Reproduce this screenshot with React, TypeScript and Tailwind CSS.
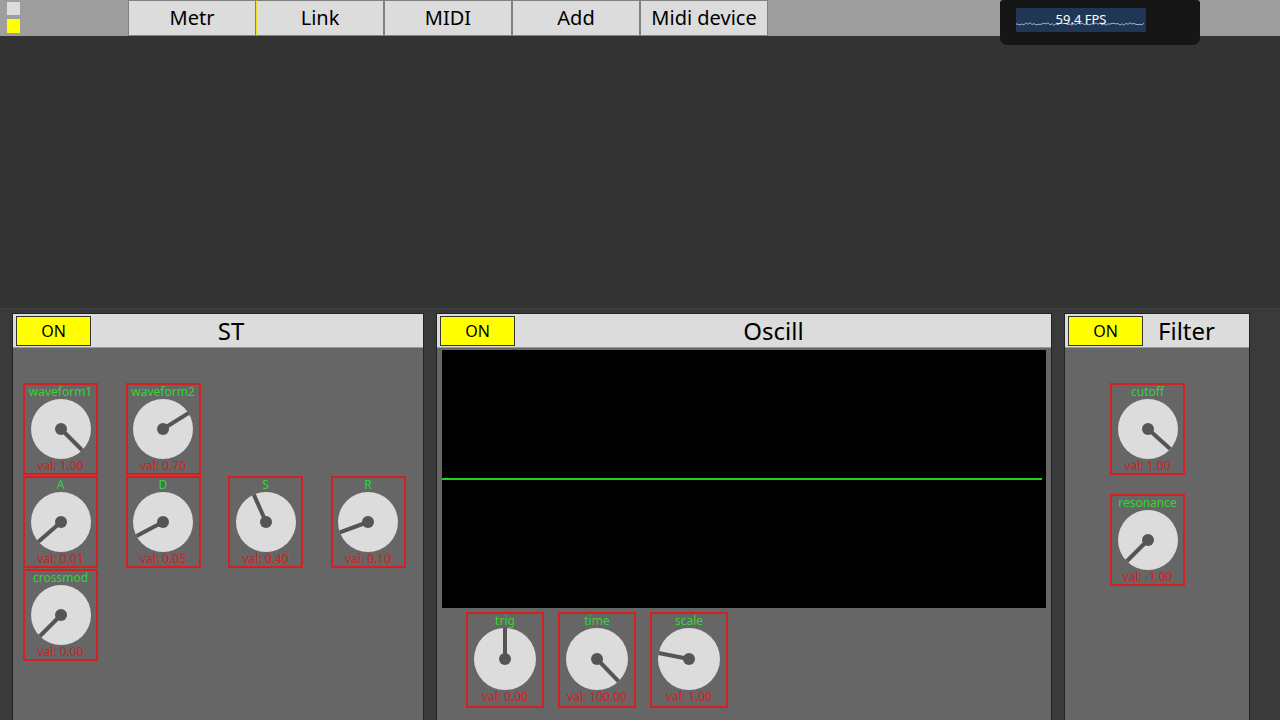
import React from "react";

const font = { fontFamily: '"Noto Sans", "Open Sans", sans-serif' };

interface KnobProps {
  label: string;
  value: string;
  angle: number; // degrees clockwise from 12 o'clock
  big?: boolean;
}

function Knob({ label, value, angle, big }: KnobProps) {
  const r = big ? 31 : 30;
  const size = r * 2 + 2;
  const c = size / 2;
  const rad = (angle * Math.PI) / 180;
  const x2 = c + Math.sin(rad) * r;
  const y2 = c - Math.cos(rad) * r;

  return (
    <div
      className={
        "flex flex-col items-center border-2 border-[#d42020] " +
        (big ? "w-[78px] h-[96px]" : "w-[75px] h-[92px]")
      }
    >
      <div className="pt-px text-[12px] leading-[12px] text-[#2ed82e] whitespace-nowrap">{label}</div>
      <svg width={size} height={size} viewBox={`0 0 ${size} ${size}`}>
        <circle cx={c} cy={c} r={r} fill="#dcdcdc" />
        <line x1={c} y1={c} x2={x2} y2={y2} stroke="#555555" strokeWidth={4} />
        <circle cx={c} cy={c} r={6} fill="#555555" />
      </svg>
      <div className="text-[12px] leading-[12px] text-[#d42020] whitespace-nowrap">{value}</div>
    </div>
  );
}

function PanelHeader({ title, padClass }: { title: string; padClass: string }) {
  return (
    <div className="flex items-center h-[34px] bg-[#dcdcdc] border-b border-[#999] pl-[3px]">
      <div className="w-[75px] h-[30px] bg-[#ffff00] border border-[#333] flex items-center justify-center text-[16px] text-black">
        ON
      </div>
      <div className={"flex-1 text-center text-[24px] leading-[30px] text-black " + padClass}>{title}</div>
    </div>
  );
}

function FpsWave() {
  const pts: string[] = [];
  for (let i = 0; i <= 128; i += 2) {
    const y = 16 + Math.sin(i * 1.7) * 0.8 + Math.sin(i * 0.37) * 0.6;
    pts.push(`${i === 0 ? "M" : "L"}${i} ${y.toFixed(2)}`);
  }
  return (
    <svg className="absolute left-0 top-0" width={130} height={24} viewBox="0 0 130 24">
      <path d={pts.join(" ")} stroke="#c8d0dc" strokeWidth={0.8} fill="none" />
    </svg>
  );
}

const menu = ["Metr", "Link", "MIDI", "Add", "Midi device"];

export default function App() {
  return (
    <div className="relative w-[1280px] h-[720px] overflow-hidden bg-[#333333]" style={font}>
      {/* top bar */}
      <div className="flex h-[36px] bg-[#9e9e9e]">
        <div className="w-[128px] flex flex-col gap-[4px] pl-[7px] pt-[2px]">
          <div className="w-[13px] h-[13px] bg-[#dcdcdc]" />
          <div className="w-[13px] h-[14px] bg-[#ffff00]" />
        </div>
        {menu.map((m, i) => (
          <div
            key={m}
            className={
              "w-[128px] h-[36px] bg-[#dcdcdc] border border-[#808080] flex items-center justify-center text-[20px] text-black " +
              (i === 1 ? "border-l-[#e8e020]" : "")
            }
          >
            {m}
          </div>
        ))}
      </div>

      {/* FPS meter overlay */}
      <div className="absolute left-[1000px] top-0 w-[200px] h-[45px] bg-[#161616] rounded-b-[7px] rounded-t-[3px]">
        <div className="relative ml-[16px] mt-[8px] w-[130px] h-[24px] bg-[#1f3655] flex items-center justify-center text-[13px] text-white">
          <FpsWave />
          <span className="relative">59.4 FPS</span>
        </div>
      </div>

      {/* empty workspace */}
      <div className="h-[272px]" />

      {/* rack */}
      <div className="flex gap-[12px] h-[412px] bg-[#3a3a3a] border-t border-[#404040] pl-[12px] pt-[4px] overflow-hidden">
        {/* ST */}
        <div className="w-[412px] h-[420px] bg-[#666666] border border-[#222]">
          <PanelHeader title="ST" padClass="pr-[52px]" />
          <div className="grid grid-cols-[75px_75px_75px_75px] gap-x-[27.5px] gap-y-[1px] pl-[10px] pt-[35px]">
            <Knob label="waveform1" value="val: 1.00" angle={135} />
            <Knob label="waveform2" value="val: 0.70" angle={58} />
            <div />
            <div />
            <Knob label="A" value="val: 0.01" angle={229} />
            <Knob label="D" value="val: 0.05" angle={242} />
            <Knob label="S" value="val: 0.40" angle={336} />
            <Knob label="R" value="val: 0.10" angle={250} />
            <Knob label="crossmod" value="val: 0.00" angle={225} />
          </div>
        </div>

        {/* Oscill */}
        <div className="w-[616px] h-[420px] bg-[#666666] border border-[#222]">
          <PanelHeader title="Oscill" padClass="pr-[19px]" />
          <div className="px-[5px] pt-[2px]">
            <div className="h-[258px] bg-black flex items-center">
              <div className="w-[600px] h-[2px] bg-[#22d022]" />
            </div>
          </div>
          <div className="flex gap-[14px] pl-[29px] pt-[4px]">
            <Knob big label="trig" value="val: 0.00" angle={0} />
            <Knob big label="time" value="val: 100.00" angle={136} />
            <Knob big label="scale" value="val: 1.00" angle={281} />
          </div>
        </div>

        {/* Filter */}
        <div className="w-[186px] h-[420px] bg-[#666666] border border-[#222]">
          <PanelHeader title="Filter" padClass="pr-[19px]" />
          <div className="flex flex-col gap-[19px] pl-[45px] pt-[35px]">
            <Knob label="cutoff" value="val: 1.00" angle={132} />
            <Knob label="resonance" value="val: -1.00" angle={225} />
          </div>
        </div>
      </div>
    </div>
  );
}
